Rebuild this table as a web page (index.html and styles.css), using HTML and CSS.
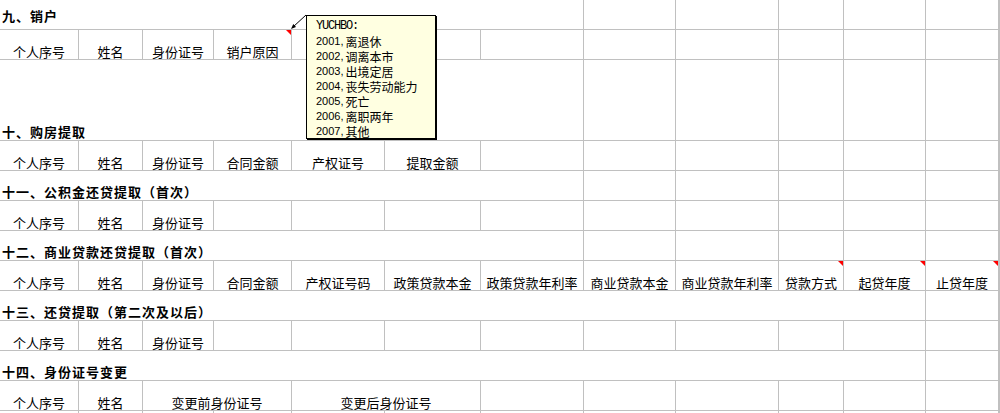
FILE: index.html
```html
<!DOCTYPE html>
<html lang="zh-CN">
<head>
<meta charset="utf-8">
<title>sheet</title>
<link rel="stylesheet" href="styles.css">
</head>
<body>
<div class="sheet">
  <!-- R0 title 九 -->
  <div class="c t first">九、销户</div>
  <div class="c"></div><div class="c"></div><div class="c"></div><div class="c"></div><div class="c"></div><div class="c"></div>
  <!-- R1 header -->
  <div class="c">个人序号</div><div class="c">姓名</div><div class="c">身份证号</div><div class="c note">销户原因</div>
  <div class="c"></div><div class="c"></div><div class="c"></div><div class="c"></div><div class="c"></div><div class="c"></div><div class="c"></div><div class="c"></div><div class="c"></div>
  <!-- R2 title 十 -->
  <div class="c t">十、购房提取</div>
  <div class="c"></div><div class="c"></div><div class="c"></div><div class="c"></div><div class="c"></div><div class="c"></div>
  <!-- R3 header -->
  <div class="c">个人序号</div><div class="c">姓名</div><div class="c">身份证号</div><div class="c">合同金额</div><div class="c">产权证号</div><div class="c">提取金额</div>
  <div class="c"></div><div class="c"></div><div class="c"></div><div class="c"></div><div class="c"></div><div class="c"></div><div class="c"></div>
  <!-- R4 title 十一 -->
  <div class="c t">十一、公积金还贷提取（首次）</div>
  <div class="c"></div><div class="c"></div><div class="c"></div><div class="c"></div><div class="c"></div><div class="c"></div>
  <!-- R5 header -->
  <div class="c">个人序号</div><div class="c">姓名</div><div class="c">身份证号</div>
  <div class="c"></div><div class="c"></div><div class="c"></div><div class="c"></div><div class="c"></div><div class="c"></div><div class="c"></div><div class="c"></div><div class="c"></div><div class="c"></div>
  <!-- R6 title 十二 -->
  <div class="c t">十二、商业贷款还贷提取（首次）</div>
  <div class="c"></div><div class="c"></div><div class="c"></div><div class="c"></div><div class="c"></div><div class="c"></div>
  <!-- R7 header -->
  <div class="c">个人序号</div><div class="c">姓名</div><div class="c">身份证号</div><div class="c">合同金额</div><div class="c">产权证号码</div><div class="c">政策贷款本金</div><div class="c">政策贷款年利率</div><div class="c">商业贷款本金</div><div class="c">商业贷款年利率</div><div class="c note">贷款方式</div><div class="c note">起贷年度</div><div class="c note">止贷年度</div><div class="c"></div>
  <!-- R8 title 十三 -->
  <div class="c t wide">十三、还贷提取（第二次及以后）</div>
  <div class="c"></div><div class="c"></div>
  <!-- R9 header -->
  <div class="c">个人序号</div><div class="c">姓名</div><div class="c">身份证号</div>
  <div class="c"></div><div class="c"></div><div class="c"></div><div class="c"></div><div class="c"></div><div class="c"></div><div class="c"></div><div class="c"></div><div class="c"></div><div class="c"></div>
  <!-- R10 title 十四 -->
  <div class="c t wide">十四、身份证号变更</div>
  <div class="c"></div><div class="c"></div>
  <!-- R11 header -->
  <div class="c">个人序号</div><div class="c">姓名</div><div class="c m2">变更前身份证号</div><div class="c m2">变更后身份证号</div>
  <div class="c"></div><div class="c"></div><div class="c"></div><div class="c"></div><div class="c"></div><div class="c"></div><div class="c"></div>
  <!-- R12 -->
  <div class="c"></div><div class="c"></div><div class="c"></div><div class="c"></div><div class="c"></div><div class="c"></div><div class="c"></div><div class="c"></div><div class="c"></div><div class="c"></div><div class="c"></div><div class="c"></div><div class="c"></div>

  <svg class="connector" width="20" height="20" viewBox="0 0 20 20">
    <line x1="18" y1="2" x2="5" y2="14" stroke="#000" stroke-width="1"/>
    <polygon points="3,16 8,14.1 5.3,11.1" fill="#000"/>
  </svg>
  <div class="comment">
    <div class="line author">YUCHBO:</div>
    <div class="line"><span class="code">2001,</span>离退休</div>
    <div class="line"><span class="code">2002,</span>调离本市</div>
    <div class="line"><span class="code">2003,</span>出境定居</div>
    <div class="line"><span class="code">2004,</span>丧失劳动能力</div>
    <div class="line"><span class="code">2005,</span>死亡</div>
    <div class="line"><span class="code">2006,</span>离职两年</div>
    <div class="line"><span class="code">2007,</span>其他</div>
  </div>
</div>
</body>
</html>
```

FILE: styles.css
```css
html, body {
  margin: 0;
  padding: 0;
  background: #fff;
  overflow: hidden;
}

body {
  font-family: "Noto Sans CJK SC", sans-serif;
  font-size: 13px;
  color: #000;
}

.sheet {
  position: relative;
  width: 1000px;
  height: 413px;
  overflow: hidden;
  display: grid;
  grid-template-columns: 79px 64px 71px 78px 93px 96px 103px 92px 103px 65px 82px 73px 1fr;
  grid-template-rows: 30px 30px 81px;
  grid-auto-rows: 30px;
}

.c {
  position: relative;
  box-sizing: border-box;
  border-right: 1px solid #c0c0c0;
  border-bottom: 1px solid #c0c0c0;
  display: flex;
  align-items: flex-end;
  justify-content: center;
  line-height: 13px;
  padding-bottom: 1px;
  white-space: nowrap;
}

.t {
  grid-column: span 7;
  justify-content: flex-start;
  font-weight: bold;
  letter-spacing: 1px;
  padding-left: 2px;
  padding-bottom: 2px;
}

.t.wide {
  grid-column: span 11;
}

.t.first {
  padding-bottom: 7px;
}

.m2 {
  grid-column: span 2;
}

.note::after {
  content: "";
  position: absolute;
  top: 0;
  right: 0;
  width: 0;
  height: 0;
  border-top: 5px solid #ff0000;
  border-left: 5px solid transparent;
}

.connector {
  position: absolute;
  left: 288px;
  top: 13px;
}

.comment {
  position: absolute;
  left: 306px;
  top: 15px;
  width: 130px;
  height: 124px;
  box-sizing: border-box;
  border: 1px solid #000;
  box-shadow: 1px 1px 0 #000;
  background: #ffffe1;
  padding: 3px 0 0 9px;
  font-family: "Noto Sans CJK SC", sans-serif;
  font-size: 12px;
  white-space: nowrap;
}

.comment .line {
  height: 15px;
  line-height: 15px;
  display: flex;
  align-items: center;
}

.comment .author {
  font-family: "Liberation Mono", monospace;
  font-size: 12px;
  letter-spacing: -1.2px;
}

.comment .code {
  font-family: "Liberation Sans", sans-serif;
  font-size: 11px;
  margin-right: 2px;
}
```
